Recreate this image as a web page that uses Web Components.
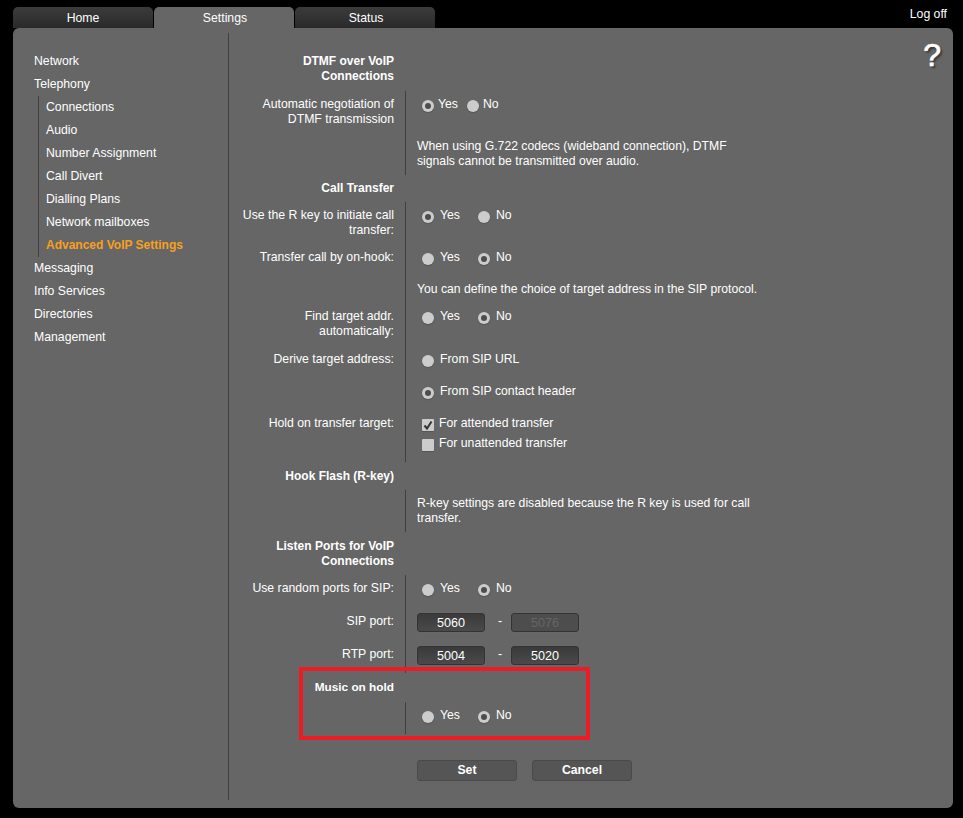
<!DOCTYPE html>
<html>
<head>
<meta charset="utf-8">
<title>Settings</title>
<style>
  html, body { margin: 0; height: 100%; background: #000; }
  body { font: 12px/15px "Liberation Sans", Arial, sans-serif; color: #fff; overflow: hidden; }
</style>
</head>
<body>
<router-page>
  <top-tabs slot="tabs"></top-tabs>
  <side-nav slot="nav"></side-nav>

  <setting-title pad="1">DTMF over VoIP<br>Connections</setting-title>
  <setting-row label="Automatic negotiation of DTMF transmission" h="84">
    <radio-pair compact yes></radio-pair>
    <hint-text style="margin-top:27px">When using G.722 codecs (wideband connection), DTMF signals cannot be transmitted over audio.</hint-text>
  </setting-row>

  <setting-title h="27" pad="6">Call Transfer</setting-title>
  <setting-row label="Use the R key to initiate call transfer:" h="42"><radio-pair yes></radio-pair></setting-row>
  <setting-row label="Transfer call by on-hook:" h="32"><radio-pair></radio-pair></setting-row>
  <setting-row h="27"><hint-text>You can define the choice of target address in the SIP protocol.</hint-text></setting-row>
  <setting-row label="Find target addr. automatically:" h="43"><radio-pair></radio-pair></setting-row>
  <setting-row label="Derive target address:" h="64">
    <radio-option>From SIP URL</radio-option>
    <radio-option checked style="margin-top:17px">From SIP contact header</radio-option>
  </setting-row>
  <setting-row label="Hold on transfer target:" h="52">
    <check-option checked>For attended transfer</check-option>
    <check-option style="margin-top:5px">For unattended transfer</check-option>
  </setting-row>

  <setting-title h="28" pad="7">Hook Flash (R-key)</setting-title>
  <setting-row h="42"><hint-text>R-key settings are disabled because the R key is used for call transfer.</hint-text></setting-row>

  <setting-title h="43" pad="7">Listen Ports for VoIP<br>Connections</setting-title>
  <setting-row label="Use random ports for SIP:" h="32"><radio-pair></radio-pair></setting-row>
  <setting-row label="SIP port:" h="33" style="--lp:7px"><port-range from="5060" to="5076" disabled></port-range></setting-row>
  <setting-row label="RTP port:" h="33" style="--lp:7px"><port-range from="5004" to="5020"></port-range></setting-row>

  <setting-title h="29" pad="7" style="font-size:11.8px">Music on hold</setting-title>
  <setting-row h="32"><radio-pair></radio-pair></setting-row>

  <form-actions></form-actions>
</router-page>

<script>
function tpl(html) {
  const t = document.createElement("template");
  t.innerHTML = html;
  return t;
}

class Base extends HTMLElement {
  constructor() {
    super();
    this.attachShadow({mode: "open"}).append(this.constructor.template.content.cloneNode(true));
  }
}

class RouterPage extends Base {
  static template = tpl(`
    <style>
      :host { display: block; position: relative; height: 818px; }
      .top { height: 28px; display: flex; justify-content: space-between; padding: 0 16px 0 13px; }
      .logoff { font-size: 12.25px; line-height: 15px; padding-top: 7px; }
      .panel { position: relative; height: 780px; margin: 0 10px 0 13px; background: #666; border-radius: 6px; display: flex; }
      .left { width: 215px; margin-top: 5px; height: 767px; border-right: 1px solid #3f3f3f; flex: none; }
      .main { flex: 1; padding-top: 25px; }
      .help { position: absolute; right: 12px; top: 9px; font: normal 32px/36px "Liberation Sans", sans-serif; color: #fff; -webkit-text-stroke: 0.7px #fff; text-shadow: 2px 2px 2px #333; }
      .mark { position: absolute; left: 299px; top: 667px; width: 283px; height: 65px; border: 4px solid #ed1c24; }
    </style>
    <div class="top"><slot name="tabs"></slot><div class="logoff">Log off</div></div>
    <div class="panel">
      <div class="left"><slot name="nav"></slot></div>
      <div class="main"><slot></slot></div>
      <div class="help">?</div>
    </div>
    <div class="mark"></div>
  `);
}

class TopTabs extends Base {
  static template = tpl(`
    <style>
      :host { display: flex; gap: 1px; padding-top: 7px; }
      div { width: 140px; height: 21px; box-sizing: border-box; border-radius: 5px 5px 0 0; background: linear-gradient(#3b3b3b, #2a2a2a);
            text-align: center; font-size: 12.25px; line-height: 22px; color: #fff; }
      .on { background: #666; }
      div + div { padding-left: 2px; }
    </style>
    <div>Home</div><div class="on">Settings</div><div>Status</div>
  `);
}

class SideNav extends Base {
  static template = tpl(`
    <style>
      :host { display: block; padding: 17px 0 0 21px; font-size: 12.25px; line-height: 23px; color: #fff; }
      .sub { margin-left: 4px; padding-left: 7px; border-left: 1px solid #3f3f3f; }
      .on { color: #f7a01e; font-weight: bold; font-size: 12px; }
    </style>
    <div>Network</div>
    <div>Telephony</div>
    <div class="sub">
      <div>Connections</div>
      <div>Audio</div>
      <div>Number Assignment</div>
      <div>Call Divert</div>
      <div>Dialling Plans</div>
      <div>Network mailboxes</div>
      <div class="on">Advanced VoIP Settings</div>
    </div>
    <div>Messaging</div>
    <div>Info Services</div>
    <div>Directories</div>
    <div>Management</div>
  `);
}

class SettingTitle extends Base {
  static template = tpl(`
    <style>
      :host { display: block; box-sizing: border-box; width: 165px; text-align: right; font-size: 12px; line-height: 15px; font-weight: bold; }
    </style>
    <slot></slot>
  `);
  connectedCallback() {
    this.style.height = (this.getAttribute("h") || 38) + "px";
    this.style.paddingTop = (this.getAttribute("pad") || 0) + "px";
  }
}

class SettingRow extends Base {
  static template = tpl(`
    <style>
      :host { display: grid; grid-template-columns: 165px 1fr; column-gap: 11px; font-size: 12.25px; line-height: 15px; }
      .label { text-align: right; padding-top: var(--lp, 6px); }
      .value { border-left: 1px solid #3f3f3f; padding: 6px 0 0 16px; }
    </style>
    <div class="label"></div>
    <div class="value"><slot></slot></div>
  `);
  connectedCallback() {
    this.style.height = this.getAttribute("h") + "px";
    this.shadowRoot.querySelector(".label").textContent = this.getAttribute("label") || "";
  }
}

class RadioOption extends Base {
  static template = tpl(`
    <style>
      :host { display: flex; gap: 6px; font-size: 12.25px; line-height: 15px; }
      i { width: 12px; height: 12px; margin-top: 3px; border-radius: 50%; background: #ccc; flex: none; position: relative; box-shadow: 0 1px 1px #555; }
      :host([checked]) i::after { content: ""; position: absolute; left: 3px; top: 3px; width: 6px; height: 6px; border-radius: 50%; background: #4d4d4d; }
    </style>
    <i></i><span><slot></slot></span>
  `);
}

class RadioPair extends Base {
  static template = tpl(`
    <style>
      :host { display: flex; font-size: 12.25px; line-height: 15px; }
      .opt { display: flex; width: 56px; gap: 6px; }
      :host([compact]) .opt { width: 45px; gap: 4px; }
      i { width: 12px; height: 12px; margin-top: 3px; border-radius: 50%; background: #ccc; flex: none; position: relative; box-shadow: 0 1px 1px #555; }
      i.on::after { content: ""; position: absolute; left: 3px; top: 3px; width: 6px; height: 6px; border-radius: 50%; background: #4d4d4d; }
    </style>
    <div class="opt"><i class="y"></i><span>Yes</span></div>
    <div class="opt"><i class="n"></i><span>No</span></div>
  `);
  connectedCallback() {
    const sel = this.hasAttribute("yes") ? ".y" : ".n";
    this.shadowRoot.querySelector(sel).classList.add("on");
  }
}

class CheckOption extends Base {
  static template = tpl(`
    <style>
      :host { display: flex; gap: 5px; font-size: 12.25px; line-height: 15px; }
      i { width: 12px; height: 12px; margin-top: 3px; background: #ccc; border-radius: 1px; flex: none; display: flex; box-shadow: 0 1px 1px #555; }
      svg { display: none; }
      :host([checked]) svg { display: block; }
    </style>
    <i><svg width="12" height="12" viewBox="0 0 12 12"><path d="M2.5 6.5 5 9.5 9.5 2.5" fill="none" stroke="#333" stroke-width="2"/></svg></i>
    <span><slot></slot></span>
  `);
}

class HintText extends Base {
  static template = tpl(`
    <style>
      :host { display: block; max-width: 345px; margin-left: -5px; font-size: 12.2px; line-height: 15px; }
    </style>
    <slot></slot>
  `);
}

class PortRange extends Base {
  static template = tpl(`
    <style>
      :host { display: flex; align-items: flex-start; margin-left: -5px; font-size: 12.6px; line-height: 18px; }
      b { font-weight: normal; box-sizing: border-box; width: 68px; height: 19px; text-align: center; background: linear-gradient(#3a3a3a, #4a4a4a); border: 1px solid #333; border-radius: 3px; box-shadow: 0 0 1px #777; }
      span { width: 22px; padding-left: 4px; text-align: center; line-height: 17px; }
      .dis { color: #666; background: #4d4d4d; }
    </style>
    <b class="a"></b><span>-</span><b class="b"></b>
  `);
  connectedCallback() {
    const s = this.shadowRoot;
    s.querySelector(".a").textContent = this.getAttribute("from");
    s.querySelector(".b").textContent = this.getAttribute("to");
    if (this.hasAttribute("disabled")) s.querySelector(".b").classList.add("dis");
  }
}

class FormActions extends Base {
  static template = tpl(`
    <style>
      :host { display: flex; gap: 15px; padding: 26px 0 0 188px; }
      div { box-sizing: border-box; width: 100px; height: 21px; border: 1px solid #4a4a4a; border-radius: 3px; background: #555;
            text-align: center; font-size: 12.25px; line-height: 18px; font-weight: bold; }
    </style>
    <div>Set</div><div>Cancel</div>
  `);
}

customElements.define("router-page", RouterPage);
customElements.define("top-tabs", TopTabs);
customElements.define("side-nav", SideNav);
customElements.define("setting-title", SettingTitle);
customElements.define("setting-row", SettingRow);
customElements.define("radio-option", RadioOption);
customElements.define("radio-pair", RadioPair);
customElements.define("check-option", CheckOption);
customElements.define("hint-text", HintText);
customElements.define("port-range", PortRange);
customElements.define("form-actions", FormActions);
</script>
</body>
</html>
